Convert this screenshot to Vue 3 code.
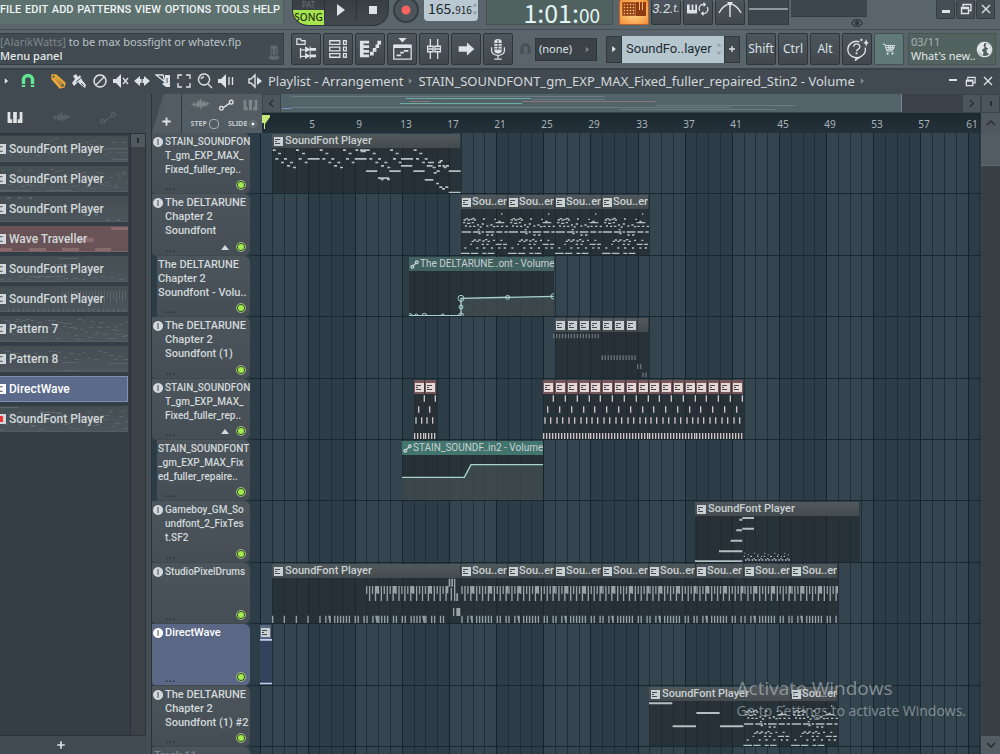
<script setup>
import { h } from 'vue'

const icons = {
  play: { box: '0 0 16 16', fill: 'M4 2l8 6-8 6z' },
  stop: { box: '0 0 16 16', fill: 'M4 4h8v8H4z' },
  right: { box: '0 0 16 16', fill: 'M5 3l6 5-6 5z' },
  tree: { box: '0 0 24 24', stroke: 'M2 7V1h4l1 2h4v4zM6 11v11M6 13h5M6 20h5', fill: 'M11 9l5 3V9l1 0 0 2h6v3h-6v2h-1v-3l-5 3zM11 16l5 3v-3h1v2h6v3h-6v2h-1v-3l-5 3z' },
  rack: { box: '0 0 24 24', stroke: 'M3 3h11v4H3zM3 10h11v4H3zM3 17h11v4H3zM18 3h3v4h-3zM18 10h3v4h-3zM18 17h3v4h-3z' },
  roll: { box: '0 0 24 24', fill: 'M1 3h10v3H5v2h6v3H5v2h6v3H5v2h6v3H1zM12 15h4v4h-4zM15 11h4v4h-4zM18 7h4v4h-4zM20 3h4v4h-4z' },
  lanes: { box: '0 0 24 24', stroke: 'M3 8h19v15H3z', fill: 'M8 0h9l-4.500 5zM3 7h19v4H3zM6 18h5v2H6zM10 15h4v2h-4zM14 13h5v2h-5z' },
  mixer: { box: '0 0 24 24', stroke: 'M8 1v9M8 15v8M16 1v9M16 15v8M5 9h6v6H5zM13 9h6v6h-6zM5 12h6M13 12h6' },
  arrow: { box: '0 0 24 24', fill: 'M4 9h9V5l8 7-8 7v-4H4z' },
  mic: { box: '0 0 24 24', stroke: 'M5 10v4a7 5 0 0 0 14 0v-4M12 19v3M8 23h8', fill: 'M8 4a4 3 0 0 1 8 0v10a4 3 0 0 1-8 0z', dark: 'M8 6h8M8 9h8M8 12h8M12 2v11' },
  magnet: { box: '0 0 16 16', thick: 'M3.500 14V7a4.500 4.500 0 0 1 9 0v7', dark: 'M1 11.500h5M10 11.500h5' },
  pencil: { box: '0 0 16 16', stroke: 'M2 6V2h4l9 8-1 4-4 1zM3 5l8 9M5 3l9 8M4 4l8 8' },
  brush: { box: '0 0 16 16', fill: 'M2 3l3-2 2 3 2-2 2 5 4 5-1 3-4-3-3-3-4 4-2-3 3-4z', dark: 'M5 9l5-4M10 10l3 3' },
  ban: { box: '0 0 16 16', stroke: 'M8 2a6 6 0 1 0 .1 0zM12 4l-8 8' },
  mute: { box: '0 0 16 16', fill: 'M0 6h3l5-5v14l-5-5H0z', stroke: 'M10 5l5 6M15 5l-5 6' },
  slip: { box: '0 0 16 16', fill: 'M0 8l6-5v3h4V3l6 5-6 5v-3H6v3z', dark: 'M8 3v10' },
  slice: { box: '0 0 16 16', stroke: 'M1 2h7l2 7z', fill: 'M10 2h5v12h-4l-4-3 3-2z', dark: 'M12 5v5' },
  select: { box: '0 0 16 16', stroke: 'M2 6V2h4M10 2h4v4M14 10v4h-4M6 14H2v-4' },
  zoom: { box: '0 0 16 16', stroke: 'M7 1a5.500 5.500 0 1 0 .1 0zM11 11l4 4M4 6a3 3 0 0 1 3-2' },
  playback: { box: '0 0 16 16', fill: 'M0 6h3l5-5v14l-5-5H0z', stroke: 'M11 4v8M14.500 4v8' },
  speaker: { box: '0 0 16 16', stroke: 'M2 6h2l4-4v12l-4-4H2z', fill: 'M10 4l5 4-5 4z' },
  wave: { box: '0 0 20 14', fill: 'M0 7l3-1 1-3 1 3 2-1 1-4 1 3 2-4 1 5 2-3 1 3 2-1 3 2-3 1-1 2-1-2-2 3-1-3-1 5-2-4-2 2-1-3-2 2-1-2z' },
  keys: { box: '0 0 16 14', fill: 'M0 1h3v8h3V1h4v8h3V1h3v12H0z', dark: 'M5.500 8v5M10.500 8v5' },
  auto: { box: '0 0 18 14', stroke: 'M3.500 8.500a2 2 0 1 0 .1 0zM14 2a2 2 0 1 0 .1 0zM5.500 10L12.500 5' },
  link: { box: '0 0 10 10', stroke: 'M2.500 6a1.500 1.500 0 1 0 .1 0zM7.500 1a1.500 1.500 0 1 0 .1 0zM3.500 6.500l3-3' },
  typing: { box: '0 0 24 16', stroke: 'M1 2h12v12H1zM1 5h12M1 8h12M1 11h12M4 2v12M7 2v12M10 2v12', fill: 'M14 1h3v8h1V1h2v8h1V1h3v14H14z' },
  loop: { box: '0 0 24 16', fill: 'M0 3h3v6h2V3h2v6h2V3h2v10H0z', stroke: 'M14 10a4.500 4.500 0 0 1 4-7h2M22 6a4.500 4.500 0 0 1-4 7h-2M18 1l2 2-2 2M18 11l-2 2 2 2' },
  metro: { box: '0 0 24 18', stroke: 'M1 13c3-6 6-8 10-9M13 4c4 1 7 3 10 9M12 6v11', fill: 'M9 2h6l-3 5z' },
  eye: { box: '0 0 16 12', stroke: 'M1 6c3-6 11-6 14 0-3 6-11 6-14 0z', fill: 'M8 3a3 3 0 1 0 .1 0z' },
  help: { box: '0 0 24 24', stroke: 'M14 4a9 8.500 0 1 0 2 15l-6 4 1-3M16 19a9 8.500 0 0 0 4-9M8 9a3.200 3 0 1 1 4 3l-1 2', fill: 'M10 15h2v2h-2zM21 1l1 3 2 1-2 1-1 3-1-3-2-1 2-1zM16 0l.6 1.400L18 2l-1.400.6L16 4l-.6-1.400L14 2l1.400-.6z' },
  cart: { box: '0 0 20 18', stroke: 'M1 2h3l3 10h9M5 4h13l-2 6H7M9 4l1 6M12 4v6M15 4l-1 6M6 7h11', fill: 'M8 14a1.500 1.500 0 1 0 .1 0zM15 14a1.500 1.500 0 1 0 .1 0z' },
  globe: { box: '0 0 18 18', stroke: 'M9 1.500a7.500 7.500 0 1 0 .1 0z', fill: 'M2 5l4-3 3 0-1 3 1 2-3 3 2 2-1 4-4-4-1-3zM11 2l4 3 1 4-1 5-3-1-1-3 2-2-3-2z' },
  knob: { box: '0 0 16 18', fill: 'M4 2a4 1.500 0 0 1 8 0v9l2 3a6 3 0 0 1-12 0l2-3z', dark: 'M6 4v8M10 4v8M4 12h8' },
  min: { box: '0 0 12 12', fill: 'M2 7h8v3H2z' },
  dash: { box: '0 0 12 12', fill: 'M2 4h8v2H2z' },
  max: { box: '0 0 12 12', stroke: 'M3 3.500V1.500h8v6H9M1.500 4.500h7v6h-7zM1 5.500h8' },
  close: { box: '0 0 12 12', stroke: 'M2 2l8 8M10 2l-8 8' },
  plus: { box: '0 0 12 12', thick: 'M6 1.500v9M1.500 6h9' },
  left: { box: '0 0 12 12', stroke: 'M8 2L4 6l4 4' },
  next: { box: '0 0 12 12', stroke: 'M4 2l4 4-4 4' },
  up: { box: '0 0 12 12', stroke: 'M2 8l4-4 4 4' },
  down: { box: '0 0 12 12', stroke: 'M2 4l4 4 4-4' },
  pattern: { box: '0 0 9 9', fill: 'M0 0h9v9H0z', dark: 'M1 2.500h5M1 6.500h5M1 4.500h2' },
  info: { box: '0 0 10 10', fill: 'M5 0a5 5 0 1 0 .1 0z', dark: 'M5 2v6' },
  tri: { box: '0 0 10 6', fill: 'M5 0l5 6H0z' },
  spin: { box: '0 0 6 14', fill: 'M3 0l3 4H0zM3 14l3-4H0z' }
}

const Icon = ({ name, w = 16, ht = 16 }) => {
  const i = icons[name]
  const kids = []
  if (i.fill) kids.push(h('path', { d: i.fill, fill: 'currentColor' }))
  if (i.stroke) kids.push(h('path', { d: i.stroke, fill: 'none', stroke: 'currentColor', 'stroke-width': 1.4 }))
  if (i.thick) kids.push(h('path', { d: i.thick, fill: 'none', stroke: 'currentColor', 'stroke-width': name === 'plus' ? 2 : 3.4 }))
  if (i.dark) kids.push(h('path', { d: i.dark, fill: 'none', stroke: '#434c52', 'stroke-width': 1 }))
  return h('svg', { viewBox: i.box, width: w, height: ht, 'aria-hidden': 'true' }, kids)
}
Icon.props = ['name', 'w', 'ht']

const menu = ['FILE', 'EDIT', 'ADD', 'PATTERNS', 'VIEW', 'OPTIONS', 'TOOLS', 'HELP']
const panels = [
  ['tree', 'Browser'], ['rack', 'Channel rack'], ['roll', 'Piano roll'], ['lanes', 'Playlist'],
  ['mixer', 'Mixer'], ['arrow', 'Step'], ['mic', 'Record']
]
const tools = [
  ['brush', 'Paint'], ['ban', 'Delete'], ['mute', 'Mute'], ['slip', 'Slip'], ['slice', 'Slice'],
  ['select', 'Select'], ['zoom', 'Zoom'], ['playback', 'Playback']
]

const BAR = 11.786
const barX = (bar) => Math.round(10.4 + (bar - 1) * BAR)
const rowHeight = (i) => Math.round((i + 1) * 61.4) - Math.round(i * 61.4)
const bars = Array.from({ length: 63 }, (_, i) => i + 1)
const marks = Array.from({ length: 15 }, (_, i) => 5 + i * 4)

/* Notes are "x,y" or "x,y,length" in thirds of a pixel. */
const parse = (text, len = 9, tall = 5) => text.trim().split(/\s+/).map((t) => {
  const [x, y, w] = t.split(',').map(Number)
  return { x, y, w: w || len, t: tall }
})
const path = (notes) => notes.map((n) => `M${n.x} ${n.y}h${n.w}v${n.t}h-${n.w}z`).join('')

const melody = path(parse(`
 2,4 18,14 10,30 36,30 27,41 54,41 45,51 63,56 72,4 90,14 80,30 98,41 107,30,36 143,4 160,14 151,30
 178,30 169,41 196,41 186,51 204,56 213,4 230,14 222,30 239,41 248,30,36 250,4 264,4,20 266,8,16 284,4
 302,14 292,30 318,30 310,41 337,41 327,51 346,56 282,67,34 318,88,34 326,92,9 345,92 354,4 371,14 363,30
 380,41 387,30,36 387,51,34 352,67,34 425,4 442,14 432,30 458,30 450,41 468,41 477,41 464,51,18 482,56
 498,41 503,36 498,51 511,51 522,51 515,56 494,67 485,72 424,67,34 458,93,26 492,104 502,115 510,120
 520,115 530,67,36 530,131,36`))
const dense = path(parse(`
 120,13,4 8,31 14,27 20,31 28,29 34,26 38,31 66,28,6 100,29,5 6,39 18,41,10 32,39 62,43 104,39,26 112,35
 12,49,6 24,50 36,50 48,46,6 56,52,6 76,49,6 88,46 96,51 106,50 120,50 134,50 2,67,28 36,67,22 62,67 74,67,26
 106,67,18 130,67,10 50,60,6 52,72 76,76 90,76 32,95 38,91 46,95 52,91 64,94 72,90 80,95 96,92,6 118,92,6
 28,104,5 62,104 76,104 104,104,18 126,104,12 10,115,6 46,115,6 66,115 90,115,6 112,115,6 128,115
 0,131,26 30,131,22 64,131,12 80,131,20`, 7, 4))
const hits = (offset, count) => {
  let d = ''
  for (let s = 0; s < count; s++) {
    if ([1, 4, 11].includes(s % 13)) continue
    d += `M${offset + s * 8.82} 113h${s % 8 === 3 ? 8 : 4}v22h-4z`
  }
  return d
}
const kit = (offset, count) => {
  let d = ''
  for (let s = 0; s < count; s++) {
    const x = offset + s * 8.82
    d += `M${x} 24h4v${s % 2 ? 45 : 24}h-4z`
    if (s % 6 === 3) d += `M${x + 4} 24h5v22h-5z`
  }
  return d
}
const intro = 'M0 113h4v22h-4zM35 113h4v22h-4zM71 113h4v22h-4zM106 113h4v22h-4z' + hits(142, 44) + kit(282, 28) +
  'M530 2h5v24h-5zM538 2h5v24h-5zM546 2h4v24h-4zM536 30h4v38h-4zM546 24h4v45h-4zM553 46h5v23h-5zM543 90h4v24h-4zM553 90h12v24h-12z'
const loop = kit(1, 16) + hits(1, 16)
const kick = 'M4 70h4v19h-4zM21 70h4v19h-4zM12 37h4v19h-4zM29 4h4v19h-4zM0 117h4v18h-4zM9 117h4v18h-4zM18 117h4v18h-4zM27 117h4v18h-4z'
const ticks = (x, y, n) => Array.from({ length: n }, (_, i) => `M${x + i * 8.9} ${y}h4v14h-4z`).join('')
const sparse = ticks(0, 5, 16) + ticks(146, 70, 12) + ticks(252, 97, 2) + ticks(268, 122, 2)
const climb = path(parse('0,133,142 72,103,70 107,71,35 124,40,17 142,35,35 133,8,9 142,3,35', 9, 6)) +
  Array.from({ length: 14 }, (_, i) => `M${146 + i * 10} ${i % 2 ? 126 : 119}h4v4h-4zM${150 + i * 10} 130h5v4h-5zM${148 + i * 10} ${110 + (i % 3) * 5}h3v3h-3z`).join('')
const steps = path(parse('0,4,70 142,33,70 71,73,70 213,73,70', 9, 6))

const SF = 'SoundFont Player'
const run = (first, step, count, extra) =>
  Array.from({ length: count }, (_, i) => ({ from: first + i * step, to: first + (i + 1) * step, ...extra }))

const tracks = [
  { lines: ['STAIN_SOUNDFON', 'T_gm_EXP_MAX_', 'Fixed_fuller_rep..'], size: 'small', clips: [{ from: 2, to: 18, title: SF, d: melody }] },
  { lines: ['The DELTARUNE', 'Chapter 2', 'Soundfont'], arrow: true, clips: run(18, 4, 4, { title: 'Sou..er', kind: 'short', d: dense }) },
  { lines: ['The DELTARUNE', 'Chapter 2', 'Soundfont - Volu..'], sub: true, clips: [{
    from: 13.6, to: 25.9, title: 'The DELTARUNE..ont - Volume', kind: 'auto', mark: 'link',
    line: 'M0 134H156V82L434 76', area: 'M156 138V82L434 76V138z',
    dots: [[4, 134, 6], [22, 134, 5], [46, 134, 7], [101, 134, 5], [156, 134, 8], [156, 108, 6], [156, 82, 9], [296, 79, 6], [434, 76, 8]]
  }] },
  { lines: ['The DELTARUNE', 'Chapter 2', 'Soundfont (1)'], clips: [
    ...run(26, 1, 7, { kind: 'mini' }), { from: 33, to: 34, kind: 'blank' }
  ], wide: { from: 25.8, d: sparse } },
  { lines: ['STAIN_SOUNDFON', 'T_gm_EXP_MAX_', 'Fixed_fuller_rep..'], size: 'small', arrow: true, clips: [
    ...run(14, 1, 2, { kind: 'red mini', d: kick }), ...run(25, 1, 17, { kind: 'red mini', d: kick })
  ] },
  { lines: ['STAIN_SOUNDFONT', '_gm_EXP_MAX_Fix', 'ed_fuller_repaire..'], size: 'small', sub: true, clips: [{
    from: 13, to: 24.95, title: 'STAIN_SOUNDF..in2 - Volume', kind: 'auto bright', mark: 'link',
    line: 'M0 67H187L207 29H424', area: 'M0 67H187L207 29H424V138H0z', dots: []
  }] },
  { lines: ['Gameboy_GM_So', 'undfont_2_FixTes', 't.SF2'], size: 'small', clips: [{ from: 37.9, to: 51.85, title: SF, d: climb }] },
  { lines: ['StudioPixelDrums'], size: 'small', clips: [{ from: 2, to: 18, title: SF, d: intro, kind: 'dim' }, ...run(18, 4, 8, { title: 'Sou..er', d: loop, kind: 'dim short' })] },
  { lines: ['DirectWave'], active: true, clips: [{ from: 1, to: 2, kind: 'blue mini', d: 'M0 0h36v5h-36zM0 131h36v5h-36z' }] },
  { lines: ['The DELTARUNE', 'Chapter 2', 'Soundfont (1) #2'], clips: [
    { from: 34, to: 46, title: SF, d: steps, tail: dense }, { from: 46, to: 50, title: 'Sou..er', kind: 'short', d: dense }
  ] }
]
const place = (c) => ({ left: barX(c.from) + 'px', width: barX(c.to) - barX(c.from) + 'px' })

const specks = (seed, count, y0, y1) => {
  let d = ''
  let s = seed
  for (let i = 0; i < count; i++) {
    s = (s * 73 + 41) % 997
    d += `M${(i * 128) / count} ${y0 + (s % (y1 - y0))}h${2 + (s % 4)}v1h-4z`
  }
  return d
}
const patterns = [
  { name: SF, d: specks(3, 40, 2, 20) + 'M106 12h22v1h-22zM112 23h16v1h-16z' },
  { name: SF, d: specks(8, 60, 3, 23) + 'M0 24h30v1h-30zM46 24h26v1h-26z' },
  { name: SF, d: 'M7 1h3v2h-3zM18 1h3v2h-3zM29 1h3v2h-3zM84 18h3v2h-3zM95 18h3v2h-3zM106 23h3v2h-3zM117 23h3v2h-3z' },
  { name: 'Wave Traveller', kind: 'red', d: 'M0 22h12v3h-12zM29 22h17v3h-17zM62 22h17v3h-17zM95 22h16v3h-16zM111 1h17v3h-17zM77 12h17v4h-17z' },
  { name: SF, d: 'M58 2h20v1h-20zM54 8h20v1h-20zM29 20h33v1h-33zM0 25h62v1h-62z' + specks(9, 14, 20, 25) },
  { name: SF, d: Array.from({ length: 24 }, (_, i) => `M${62 + i * 3} 5h1v${i % 2 ? 8 : 12}h-1zM${8 + i * 5} 22h1v4h-1z`).join('') },
  { name: 'Pattern 7', d: specks(5, 70, 3, 24) },
  { name: 'Pattern 8', d: specks(2, 26, 4, 14) + 'M62 24h16v1h-16zM110 17h18v1h-18zM62 16h16v1h-16z' },
  { name: 'DirectWave', kind: 'blue', d: '' },
  { name: SF, rec: true, d: specks(6, 60, 4, 24) + 'M0 1h18v1h-18zM40 6h22v1h-22z' }
]
</script>

<template>
  <div class="app">
    <header class="top">
      <div class="bar bar-one">
        <nav class="menu"><a v-for="m in menu" :key="m" href="#">{{ m }}</a></nav>
        <div class="transport">
          <button class="mode"><span>PAT</span><b>SONG</b></button>
          <button aria-label="Play"><Icon name="play" /></button>
          <button aria-label="Stop"><Icon name="stop" /></button>
        </div>
        <button class="record" aria-label="Record"></button>
        <div class="tempo"><span>165.<small>916</small></span><Icon name="spin" :w="6" :ht="12" /></div>
        <div class="clock"><span>1:01:<small>00</small></span></div>
        <div class="group">
          <button class="key lit" aria-label="Typing keyboard"><Icon name="typing" :w="24" /></button>
          <button class="key count">3.2.<small>t.</small></button>
          <button class="key" aria-label="Loop record"><Icon name="loop" :w="22" /></button>
          <button class="key" aria-label="Metronome"><Icon name="metro" :w="24" :ht="18" /></button>
        </div>
        <div class="scope"></div>
        <div class="meter"><Icon name="eye" :w="12" :ht="10" /></div>
        <div class="window">
          <button aria-label="Minimize"><Icon name="min" :w="12" :ht="12" /></button>
          <button aria-label="Restore"><Icon name="max" :w="12" :ht="12" /></button>
          <button aria-label="Close"><Icon name="close" :w="12" :ht="12" /></button>
        </div>
      </div>
      <div class="bar bar-two">
        <div class="hint">
          <p><i>[AlarikWatts]</i> to be max bossfight or whatev.flp</p>
          <p class="strong">Menu panel</p>
          <Icon name="knob" :w="14" :ht="18" />
        </div>
        <div class="group panels">
          <button v-for="p in panels" :key="p[0]" class="key" :aria-label="p[1]"><Icon :name="p[0]" :w="22" :ht="22" /></button>
        </div>
        <Icon class="snap" name="magnet" :w="13" :ht="14" />
        <button class="snap-pick">(none)<Icon name="right" :w="9" :ht="9" /></button>
        <div class="picker-box">
          <button aria-label="Pattern menu"><Icon name="right" :w="10" :ht="10" /></button>
          <span>SoundFo..layer<Icon name="spin" :w="6" :ht="12" /></span>
          <button aria-label="Add pattern"><Icon name="plus" :w="8" :ht="8" /></button>
        </div>
        <div class="group mods">
          <button class="key">Shift</button><button class="key">Ctrl</button><button class="key">Alt</button>
          <button class="key" aria-label="Help"><Icon name="help" :w="23" :ht="23" /></button>
          <button class="key shop" aria-label="Shop"><Icon name="cart" :w="14" :ht="14" /></button>
        </div>
        <a class="news" href="#"><span><i>03/11</i>What's new..</span><Icon name="globe" :w="17" :ht="17" /></a>
      </div>
    </header>

    <div class="title">
      <Icon class="lead" name="right" :w="9" :ht="10" />
      <Icon class="green" name="magnet" :w="16" />
      <Icon class="amber" name="pencil" :w="16" />
      <button v-for="t in tools" :key="t[0]" :aria-label="t[1]"><Icon :name="t[0]" :w="16" /></button>
      <Icon class="speaker" name="speaker" :w="16" />
      <h1>Playlist - Arrangement</h1><Icon class="crumb" name="right" :w="9" :ht="10" />
      <h1>STAIN_SOUNDFONT_gm_EXP_MAX_Fixed_fuller_repaired_Stin2 - Volume</h1><Icon class="crumb" name="right" :w="9" :ht="10" />
      <div class="sub-window">
        <button aria-label="Minimize playlist"><Icon name="dash" :w="12" :ht="12" /></button>
        <button aria-label="Restore playlist"><Icon name="max" :w="11" :ht="11" /></button>
        <button aria-label="Close playlist"><Icon name="close" :w="12" :ht="12" /></button>
      </div>
    </div>

    <main class="work">
      <aside class="picker">
        <div class="picker-tabs">
          <button class="on" aria-label="Patterns"><Icon name="keys" :w="16" :ht="13" /></button>
          <button aria-label="Audio"><Icon name="wave" :w="20" :ht="14" /></button>
          <button aria-label="Automation"><Icon name="auto" :w="18" :ht="14" /></button>
        </div>
        <div class="picker-body">
          <ul>
            <li v-for="(p, i) in patterns" :key="i" :class="p.kind">
              <svg viewBox="0 0 128 26" preserveAspectRatio="none"><path :d="p.d" /></svg>
              <Icon name="pattern" :w="10" :ht="10" /><em v-if="p.rec"></em><span>{{ p.name }}</span>
            </li>
          </ul>
          <div class="rail"><button aria-label="Scroll patterns"></button></div>
        </div>
        <button class="add" aria-label="Add"><Icon name="plus" :w="10" :ht="10" /></button>
      </aside>

      <section class="playlist">
        <div class="heads">
          <div class="tab"><Icon name="plus" :w="11" :ht="11" /></div>
          <div class="modes">
            <div><Icon name="wave" :w="20" :ht="14" /><Icon class="on" name="auto" :w="17" :ht="14" /><Icon name="keys" :w="15" :ht="12" /></div>
            <div class="checks"><label>STEP<input type="checkbox"></label><label>SLIDE<input type="radio" checked></label></div>
          </div>
        </div>
        <div class="nav">
          <div class="overview">
            <button aria-label="Scroll left"><Icon name="left" :w="11" :ht="11" /></button>
            <div class="track-map">
              <svg viewBox="0 0 620 18" preserveAspectRatio="none">
                <path d="M125 4h125v1h-125zM119 9h122v1h-122z" fill="#6fa9a4" />
                <path d="M129 7h20v1h-20zM241 7h134v1h-134z" fill="#8c7676" />
                <path d="M10 2h154v1h-154zM164 2h160v1h-160zM251 5h73v1h-73zM10 13h440v1h-440zM375 11h140v1h-140zM340 15h155v1h-155z" fill="#6d7a82" />
                <path d="M1 14h9v1h-9z" fill="#7e90c8" />
              </svg>
            </div>
            <button aria-label="Scroll right"><Icon name="next" :w="11" :ht="11" /></button>
            <button class="grip" aria-label="Zoom"></button>
          </div>
          <div class="ruler">
            <div class="ruler-strip">
              <svg class="cursor" viewBox="0 0 10 14" width="10" height="14"><path d="M0 0h8v2L3 9v5H2V8L0 8z" fill="#c5e97a" /></svg>
              <span v-for="m in marks" :key="m" :style="{ left: barX(m) + 'px' }">{{ m }}</span>
            </div>
            <button aria-label="Scroll up"><Icon name="up" :w="12" :ht="12" /></button>
          </div>
        </div>

        <div class="rows">
          <svg class="grid" aria-hidden="true">
            <template v-for="b in bars" :key="b">
              <rect v-if="Math.floor((b - 1) / 4) % 2 === 0" :x="barX(b)" y="0" :width="barX(b + 1) - barX(b)" height="100%" class="shade" />
              <rect :x="barX(b)" y="0" width="1" height="100%" :class="b % 4 === 1 ? 'line strong' : 'line'" />
            </template>
          </svg>
          <div v-for="(t, i) in tracks" :key="i" class="row" :style="{ height: rowHeight(i) + 'px' }">
            <div class="track" :class="[t.size, { sub: t.sub, active: t.active }]">
              <Icon v-if="!t.sub" class="info" name="info" :w="10" :ht="10" />
              <p><span v-for="l in t.lines" :key="l">{{ l }}</span></p>
              <div class="foot"><i>...</i><Icon v-if="t.arrow" name="tri" :w="8" :ht="5" /><button class="led" aria-label="Mute track"></button></div>
            </div>
            <div class="lane">
              <div v-for="(c, k) in t.clips" :key="k" class="clip" :class="c.kind" :style="place(c)">
                <div class="cap"><Icon v-if="c.kind !== 'blank'" :name="c.mark || 'pattern'" :w="9" :ht="9" /><span v-if="c.title">{{ c.title }}</span></div>
                <div class="notes">
                  <svg v-if="c.line" :viewBox="`0 0 ${(barX(c.to) - barX(c.from)) * 3} 138`">
                    <path class="area" :d="c.area" /><path class="curve" :d="c.line" />
                    <circle v-for="(o, n) in c.dots" :key="n" :cx="o[0]" :cy="o[1]" :r="o[2]" />
                  </svg>
                  <svg v-else-if="c.d" :viewBox="`0 0 ${(barX(c.to) - barX(c.from)) * 3} 138`">
                    <path :d="c.d" /><path v-if="c.tail" :d="c.tail" transform="translate(283 0)" />
                  </svg>
                </div>
              </div>
              <svg v-if="t.wide" class="wide" viewBox="0 0 288 138" width="96" height="46" :style="{ left: barX(t.wide.from) + 'px' }"><path :d="t.wide.d" /></svg>
            </div>
          </div>
          <div class="row last"><div class="track"><p><span>Track 11</span></p></div><div class="lane"></div></div>
        </div>
        <div class="vscroll"><div class="thumb"></div><button aria-label="Scroll down"><Icon name="down" :w="12" :ht="12" /></button></div>
      </section>
    </main>
    <div class="watermark"><strong>Activate Windows</strong><span>Go to Settings to activate Windows.</span></div>
  </div>
</template>

<style>
html, body { margin: 0; background: #3f484e; }
</style>

<style scoped>
.app { --narrow: Roboto, "Liberation Sans", sans-serif; --digits: "Noto Sans CJK SC", "Liberation Sans", sans-serif; position: relative; height: 100vh; overflow: hidden; display: flex; flex-direction: column; background: #414a50; color: #dce2e5; font: 13px/16px "Noto Sans", sans-serif; }
button { padding: 0; border: 0; background: none; color: inherit; font: inherit; display: flex; align-items: center; justify-content: center; }
svg { display: block; flex: none; }
p, h1, ul { margin: 0; padding: 0; font-weight: 400; }
i { font-style: normal; }
.top { background: #5a646b; border-bottom: 2px solid #394248; }
.bar { display: flex; box-sizing: border-box; }
.bar-one { height: 30px; align-items: flex-start; border-bottom: 1px solid #464f56; }
.bar-two { height: 38px; padding-right: 5px; align-items: center; }
.menu { width: 284px; height: 24px; box-sizing: border-box; display: flex; justify-content: space-between; padding-right: 3px; background: #5d716f; border-right: 1px solid #4d595d; font: 500 11px/19px var(--narrow); white-space: nowrap; }
.menu a { color: #eef3f3; text-decoration: none; }
.transport { display: flex; width: 97px; height: 26px; margin-left: 8px; background: linear-gradient(#373e43, #424a50); border: 1px solid #2d3439; border-top: 0; border-radius: 0 0 16px 16px; box-sizing: border-box; overflow: hidden; }
.transport button { flex: 1; height: 20px; border-left: 1px solid #2d3439; }
.transport .mode { flex-direction: column; justify-content: flex-start; height: 26px; border: 0; font: 10px/10px "Noto Sans", sans-serif; }
.mode span { height: 10px; color: #6b757b; font-size: 8px; line-height: 9px; }
.mode b { width: 100%; height: 15px; line-height: 14px; background: #a5e34f; color: #24320f; font-weight: 500; text-align: center; }
.record { width: 26px; height: 26px; margin: -3px 0 0 4px; border-radius: 50%; border: 2px solid #353c42; background: radial-gradient(circle, #f7655c 0 4px, #4c555b 5px); }
.tempo { display: flex; align-items: center; justify-content: space-between; width: 54px; height: 21px; box-sizing: border-box; margin-left: 5px; padding: 0 2px 3px 4px; background: #b9c8d1; color: #20282d; font: 14px/18px var(--digits); border-radius: 0 0 4px 4px; }
.tempo span, .clock span { white-space: nowrap; }
.tempo small { font-size: 10px; }
.tempo svg, .picker-box span svg { color: #93a1aa; }
.clock { width: 127px; height: 25px; margin-left: 8px; box-sizing: border-box; padding-right: 12px; background: #50625f; border: 1px solid #44514f; border-top: 0; color: #e4f4f6; text-align: right; font: 25px/24px var(--digits); }
.clock small { font-size: 19px; }
.group { display: flex; gap: 2px; }
.bar-one .group { margin-left: 6px; }
.key { width: 30px; height: 32px; box-sizing: border-box; border: 1px solid #2f363b; border-radius: 2px; background: linear-gradient(#4d565c, #40484e); font-size: 12px; }
.bar-one .key { height: 25px; padding-bottom: 7px; border-top: 0; }
.key.lit { background: radial-gradient(#ffdf8e, #f58d36); color: #8b3a11; border-color: #b9632c; }
.key.count { font: italic 13px/16px var(--narrow); }
.key.shop { background: #5f7a77; border-color: #42504f; }
.scope { width: 41px; height: 25px; margin-left: 3px; box-sizing: border-box; background: linear-gradient(#3d464c 8px, #8d989e 8px 10px, #3d464c 10px); border: 1px solid #343c41; border-top: 0; }
.meter { width: 76px; height: 16px; margin-left: 2px; background: #3d464c; border-bottom: 1px solid #343c41; color: #2f373c; }
.meter svg { margin: 18px 0 0 60px; }
.window { display: flex; gap: 1px; margin-left: auto; padding-right: 5px; }
.window button { width: 19px; height: 19px; border: 1px solid #353c41; border-top: 0; box-sizing: border-box; background: #454e54; border-radius: 2px; }
.hint { position: relative; width: 284px; height: 32px; box-sizing: border-box; background: #424b51; border: 1px solid #353d42; border-left: 0; font-size: 11px; line-height: 14px; white-space: nowrap; padding-top: 1px; color: #bcc4c8; }
.hint i { color: #7b868c; }
.hint .strong { color: #e6eaec; font-weight: 500; }
.hint svg { position: absolute; right: 2px; bottom: 2px; color: #606a70; }
.panels { margin-left: 7px; }
.snap { color: #474f55; margin-left: 6px; }
.snap-pick { justify-content: space-between; width: 62px; height: 23px; box-sizing: border-box; margin-left: 3px; padding: 0 4px 0 3px; background: #3a4247; border: 1px solid #2f363b; font-size: 11px; }
.snap-pick svg { color: #77828a; }
.picker-box { display: flex; width: 134px; height: 27px; margin-left: 9px; flex: none; }
.picker-box button { width: 16px; background: #424b50; border: 1px solid #30383d; box-sizing: border-box; }
.picker-box span { flex: 1; display: flex; align-items: center; justify-content: space-between; padding: 0 2px 0 4px; background: #b6c6cf; color: #222a30; font: 13px/20px var(--narrow); }
.mods { margin-left: 6px; }
.news { flex: 1; display: flex; align-items: center; justify-content: space-between; margin-left: 4px; padding: 0 2px; height: 32px; box-sizing: border-box; background: #52635f; border: 1px solid #48554f; color: #e1e7e7; font-size: 11px; line-height: 14px; text-decoration: none; white-space: nowrap; }
.news i { display: block; color: #a7b3b3; }
.key, .hint, .snap-pick { flex: none; }

.title { display: flex; align-items: center; height: 24px; box-sizing: border-box; gap: 5px; padding: 0 0 2px 2px; background: #414a50; white-space: nowrap; }
.title h1 { font: 13px/18px "Noto Sans", sans-serif; color: #d3d9dc; }
.title h1 + svg { margin: 0 -2px; }
.lead { margin-right: 4px; }
.green { color: #63e694; margin-right: 9px; }
.amber { color: #eaa83a; }
.speaker { margin-left: 8px; }
.crumb { color: #818b90; }
.sub-window { display: flex; gap: 6px; margin-left: auto; padding-right: 6px; }

.work { flex: 1; min-height: 0; display: flex; }
.picker { width: 146px; display: flex; flex-direction: column; flex: none; border-right: 5px solid #454e54; box-sizing: content-box; }
.picker-tabs { display: flex; height: 39px; padding: 8px 0 0 7px; gap: 28px; box-sizing: border-box; }
.picker-tabs button { height: 31px; color: #566067; }
.picker-tabs .on { color: #e0e4e6; }
.picker-body { flex: 1; min-height: 0; display: flex; background: #333e46; border: 1px solid #2a3339; border-left: 0; overflow: hidden; }
.picker ul { flex: 1; list-style: none; padding-top: 2px; display: flex; flex-direction: column; gap: 4px; }
.picker li { position: relative; width: 128px; height: 26px; box-sizing: border-box; display: flex; align-items: center; background: linear-gradient(#454e53, #4c555b); border-bottom: 1px solid #525c62; color: #d2d8da; font: 500 12px/16px var(--narrow); }
.picker li > svg:first-child { position: absolute; inset: 0; width: 128px; height: 26px; fill: #5b656b; }
.picker li svg + svg { margin-left: -4px; position: relative; }
.picker li span { position: relative; margin-left: 3px; }
.picker li em { position: absolute; left: 0; top: 10px; width: 3px; height: 6px; background: #e33; }
.picker li.red { background: #6a5356; border-color: #7a6265; }
.picker li.red > svg:first-child { fill: #88696c; }
.picker li.blue { background: #5b6a8b; border: 1px solid #8190b2; border-left: 0; color: #fff; }
.rail { width: 14px; background: #3a4147; border-left: 1px solid #29323a; }
.rail button { width: 14px; height: 13px; background: #50595f; }
.rail button::before, .grip::before { content: ""; width: 2px; height: 5px; background: #262d31; }
.add { height: 18px; width: 122px; }

.playlist { flex: 1; min-width: 0; display: grid; grid-template-columns: 110px 1fr 19px; grid-template-rows: 39px 1fr; border-left: 1px solid #2a3338; }
.heads { display: flex; background: #414a50; }
.tab { width: 29px; display: flex; align-items: flex-end; justify-content: center; padding-bottom: 6px; box-sizing: border-box; background: #535c62; clip-path: polygon(40% 0, 100% 0, 100% 100%, 0 100%); }
.modes { flex: 1; background: #535c62; border-left: 1px solid #343c41; color: #7c868b; display: flex; flex-direction: column; justify-content: space-around; }
.modes > div { display: flex; align-items: center; justify-content: space-around; padding-left: 4px; }
.modes .on { color: #e2e6e8; }
.checks label { display: flex; align-items: center; gap: 2px; font: bold 7px/10px "Noto Sans", sans-serif; color: #c2c9cc; }
.checks input { appearance: none; margin: 0; width: 10px; height: 10px; box-sizing: border-box; border: 1px solid #a8b0b4; border-radius: 4px; }
.checks input[type="radio"] { width: 8px; height: 8px; border-radius: 50%; border-color: #737d83; background: radial-gradient(circle, #e8ecee 0 1px, transparent 2px); }
.nav { grid-column: 2 / 4; display: flex; flex-direction: column; min-width: 0; }
.overview { display: flex; height: 19px; background: #3a4148; }
.overview button { width: 19px; box-sizing: border-box; background: #4c555b; border: 1px solid #3b4449; color: #262d31; }
.track-map { flex: 1; }
.track-map svg { width: 91%; height: 18px; background: #53636a; border-right: 1px solid #77868d; }
.ruler { display: flex; height: 20px; }
.ruler-strip { position: relative; flex: 1; background: linear-gradient(#1c292f, #24313a); overflow: hidden; }
.ruler-strip span { position: absolute; top: 4px; width: 24px; margin-left: -20px; text-align: center; font: 10px/14px "Noto Sans", sans-serif; color: #a9b4ba; }
.cursor { position: absolute; left: 0; top: 2px; }
.ruler button { width: 19px; background: #4f585e; color: #262d31; }

.rows { position: relative; grid-column: 1 / 3; overflow: hidden; background: #2d3d47; min-height: 0; }
.grid { position: absolute; left: 98px; top: 0; width: calc(100% - 98px); height: 100%; shape-rendering: crispEdges; }
.shade { fill: #34454f; }
.line { fill: #1f2e37; }
.line.strong { fill: #15232b; }
.row { position: relative; display: flex; overflow: hidden; }
.track { position: relative; width: 98px; box-sizing: border-box; padding: 2px 0 0 13px; background: linear-gradient(#4b555b, #454e54); border-bottom: 1px solid #3f484d; border-radius: 0 6px 6px 4px; color: #d2d8db; flex: none; }
.track.sub { margin-left: 5px; width: 93px; padding-left: 1px; border-radius: 0 6px 6px 0; }
.track p { font: 500 11px/14px var(--narrow); white-space: nowrap; }
.track.small p { font-size: 10px; }
.track p span { display: block; }
.track.active { background: #5a6885; color: #fff; }
.info { position: absolute; left: 1px; top: 4px; }
.foot { position: absolute; left: 13px; right: 4px; bottom: 3px; height: 10px; display: flex; align-items: center; gap: 11px; }
.sub .foot { left: 8px; }
.foot i { margin-right: auto; color: #2c3438; line-height: 10px; }
.led { width: 10px; height: 10px; box-sizing: border-box; border-radius: 50%; background: #a4ea50; border: 1px solid #9db08d; box-shadow: inset 0 0 0 1px #2d4a16; }
.foot svg + .led { margin-left: -4px; }
.lane { position: relative; flex: 1; border-bottom: 1px solid #182730; overflow: hidden; }
.clip { position: absolute; top: 1px; bottom: 0; display: flex; flex-direction: column; background: rgba(33, 40, 44, 0.6); }
.cap { display: flex; align-items: center; gap: 2px; height: 14px; box-sizing: border-box; padding-left: 2px; background: linear-gradient(#50585c, #444b4f); border-right: 1px solid #333b40; color: #c9d0d2; font: 500 11px/14px var(--narrow); white-space: nowrap; overflow: hidden; flex: none; }
.short .cap { gap: 1px; padding-left: 1px; }
.notes { flex: 1; overflow: hidden; }
.notes svg { width: 100%; height: 46px; fill: #b4bfc4; }
.dim .notes svg { fill: #98a3a8; }
.auto .cap { background: #416060; font-size: 10px; font-weight: 400; padding-left: 1px; gap: 1px; border: 0; }
.auto.bright .cap { background: #41756e; }
.area { fill: #4a565a; opacity: .6; }
.curve { fill: none; stroke: #a9d2d0; stroke-width: 4; }
.auto circle { fill: none; stroke: #a9d2d0; stroke-width: 3; }
.mini .cap { padding-left: 1px; }
.red .cap { background: #765659; color: #e6d6d6; }
.red .notes svg { fill: #cfc2c3; }
.blue.clip { background: #34435c; }
.blue .cap { background: #5a6885; }
.blue .notes svg { fill: #c3cdf0; }
.wide { position: absolute; top: 15px; fill: #69757b; }
.last { height: 20px; }
.last .track { color: #7b868b; padding-left: 2px; height: 20px; }
.vscroll { display: flex; flex-direction: column; justify-content: space-between; background: #383f45; }
.thumb { height: 32px; background: #535c62; border-bottom: 1px solid #646d73; }
.vscroll button { height: 18px; background: #535c62; color: #22292d; }
.watermark { position: absolute; right: 34px; bottom: 34px; display: flex; flex-direction: column; color: rgba(190, 196, 200, 0.6); font: 14px/18px "Open Sans", sans-serif; white-space: nowrap; pointer-events: none; }
.watermark strong { font-weight: 400; font-size: 19px; line-height: 27px; }
</style>
